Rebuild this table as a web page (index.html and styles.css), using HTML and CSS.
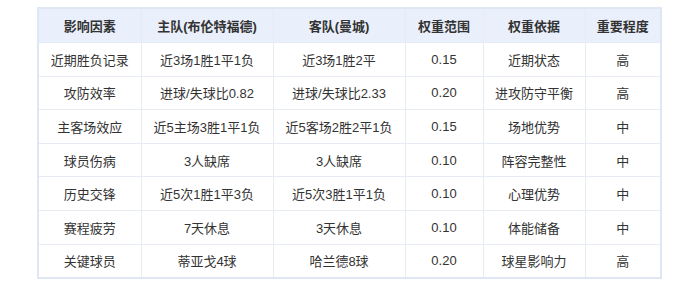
FILE: index.html
```html
<!DOCTYPE html>
<html lang="zh-CN">

<head>
	<meta charset="UTF-8">
	<title>影响因素权重</title>
	<link rel="stylesheet" href="styles.css">
</head>

<body>
	<table class="factors">
		<colgroup>
			<col class="c-factor">
			<col class="c-team">
			<col class="c-team">
			<col class="c-range">
			<col class="c-basis">
			<col class="c-level">
		</colgroup>
		<thead>
			<tr>
				<th>影响因素</th>
				<th>主队(布伦特福德)</th>
				<th>客队(曼城)</th>
				<th>权重范围</th>
				<th>权重依据</th>
				<th>重要程度</th>
			</tr>
		</thead>
		<tbody>
			<tr>
				<td>近期胜负记录</td>
				<td>近3场1胜1平1负</td>
				<td>近3场1胜2平</td>
				<td>0.15</td>
				<td>近期状态</td>
				<td>高</td>
			</tr>
			<tr>
				<td>攻防效率</td>
				<td>进球/失球比0.82</td>
				<td>进球/失球比2.33</td>
				<td>0.20</td>
				<td>进攻防守平衡</td>
				<td>高</td>
			</tr>
			<tr>
				<td>主客场效应</td>
				<td>近5主场3胜1平1负</td>
				<td>近5客场2胜2平1负</td>
				<td>0.15</td>
				<td>场地优势</td>
				<td>中</td>
			</tr>
			<tr>
				<td>球员伤病</td>
				<td>3人缺席</td>
				<td>3人缺席</td>
				<td>0.10</td>
				<td>阵容完整性</td>
				<td>中</td>
			</tr>
			<tr>
				<td>历史交锋</td>
				<td>近5次1胜1平3负</td>
				<td>近5次3胜1平1负</td>
				<td>0.10</td>
				<td>心理优势</td>
				<td>中</td>
			</tr>
			<tr>
				<td>赛程疲劳</td>
				<td>7天休息</td>
				<td>3天休息</td>
				<td>0.10</td>
				<td>体能储备</td>
				<td>中</td>
			</tr>
			<tr>
				<td>关键球员</td>
				<td>蒂亚戈4球</td>
				<td>哈兰德8球</td>
				<td>0.20</td>
				<td>球星影响力</td>
				<td>高</td>
			</tr>
		</tbody>
	</table>
</body>

</html>
```

FILE: styles.css
```css
* {
	margin: 0;
	padding: 0;
}

body {
	background: #fff;
	padding-top: 7px;
	font-family: "Liberation Sans", "Noto Sans CJK SC", sans-serif;
	font-size: 13px;
	color: #333;
}

.factors {
	width: 623px;
	margin: 0 auto;
	border-collapse: collapse;
	table-layout: fixed;
	border: 2px solid #e0e7f4;
}

.c-factor {
	width: 103px;
}

.c-team {
	width: 132px;
}

.c-range {
	width: 78px;
}

.c-basis {
	width: 102px;
}

.c-level {
	width: 76px;
}

.factors th,
.factors td {
	border: 1px solid #e6ebf4;
	text-align: center;
	white-space: nowrap;
	padding: 0;
}

.factors th {
	height: 33px;
	background: #e9effb;
	font-weight: bold;
	color: #333;
}

.factors td {
	height: 32.6px;
}
```
